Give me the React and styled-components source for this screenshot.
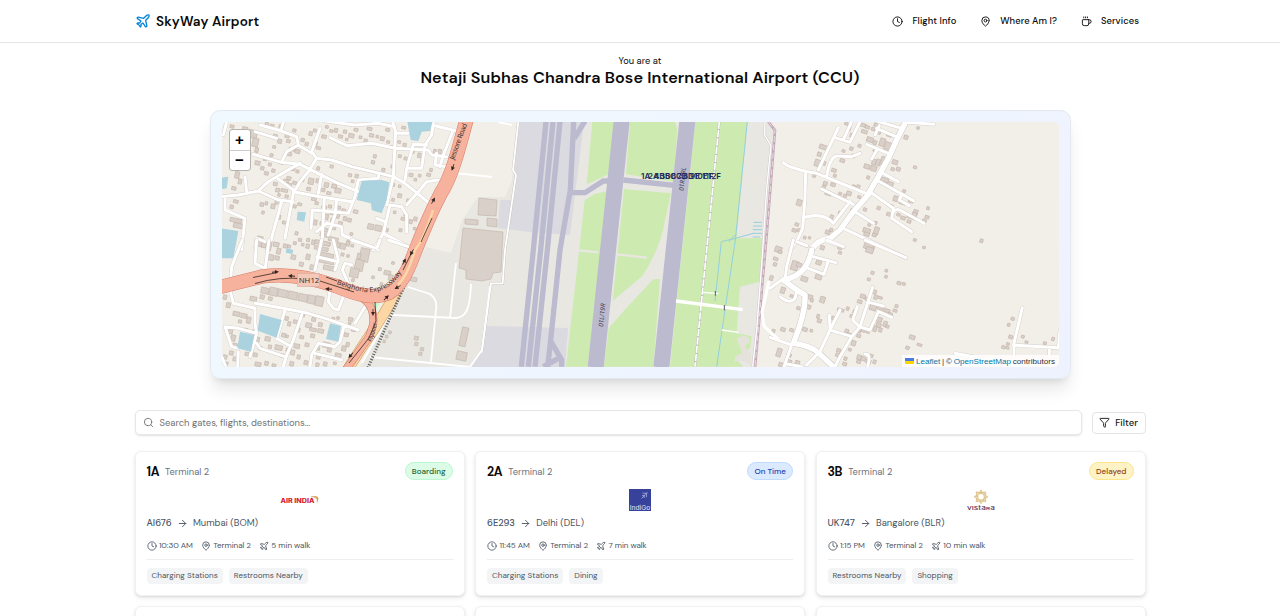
import React from "react";
import styled, { createGlobalStyle } from "styled-components";
import { Plane, Clock, MapPin, Coffee, Search, Filter, ArrowRight } from "lucide-react";

const GlobalStyle = createGlobalStyle`
  * { box-sizing: border-box; }
  html, body { margin: 0; height: 616px; overflow: hidden; background: #fff; }
  body { font-family: "DM Sans", Inter, "Liberation Sans", sans-serif; color: #0a0a0a; }
`;

const Header = styled.header`
  height: 43px;
  border-bottom: 1px solid #e5e7eb;
`;
const HeaderInner = styled.div`
  width: 1010px;
  height: 42px;
  margin: 0 auto;
  padding-right: 6px;
  display: flex;
  align-items: center;
  justify-content: space-between;
`;
const Brand = styled.div`
  display: flex;
  align-items: center;
  gap: 5px;
  font-size: 13.5px;
  font-weight: 600;
  letter-spacing: 0.14px;
  white-space: nowrap;
  svg { color: #0284d8; }
`;
const Nav = styled.nav`
  display: flex;
  gap: 23.7px;
`;
const NavItem = styled.a`
  display: flex;
  align-items: center;
  gap: 9.3px;
  font-size: 9.4px;
  font-weight: 500;
  letter-spacing: 0.06px;
  white-space: nowrap;
`;

const Location = styled.section`
  padding-top: 11px;
  text-align: center;
`;
const Eyebrow = styled.p`
  margin: 0;
  font-size: 9.35px;
  line-height: 14px;
`;
const Title = styled.h1`
  margin: 0;
  font-size: 16.2px;
  line-height: 20px;
  font-weight: 600;
  letter-spacing: 0.11px;
`;

const MapCard = styled.section`
  width: 861px;
  height: 269px;
  margin: 22px auto 0;
  padding: 11px;
  border: 1px solid #e3e9ef;
  border-radius: 10px;
  background: linear-gradient(135deg, #f0f9ff, #eef2ff);
  box-shadow: 0 13px 17px -3px rgba(0, 0, 0, 0.1), 0 5px 7px -4px rgba(0, 0, 0, 0.1);
`;
const MapFrame = styled.div`
  position: relative;
  width: 837px;
  height: 245px;
  overflow: hidden;
  border-radius: 5px;
  background: #f2efe9;
  > svg { display: block; }
`;
const ZoomControl = styled.div`
  position: absolute;
  left: 7px;
  top: 7px;
  width: 22px;
  border: 1px solid #b7b4b0;
  border-radius: 3px;
  background: #fff;
`;
const ZoomButton = styled.div`
  height: 20px;
  padding-bottom: 1px;
  display: flex;
  align-items: center;
  justify-content: center;
  font: bold 15px "Liberation Sans", sans-serif;
  color: #000;
  & + & { height: 20px; padding-bottom: 3px; border-top: 1px solid #ccc; }
`;
const Attribution = styled.div`
  position: absolute;
  right: 0;
  bottom: 0;
  height: 12px;
  padding: 0 3.5px 0 3px;
  display: flex;
  align-items: center;
  gap: 1.8px;
  background: rgba(255, 255, 255, 0.8);
  font: 8.1px "Liberation Sans", sans-serif;
  color: #333;
  white-space: nowrap;
  a { color: #0078a8; }
`;

const SearchRow = styled.div`
  width: 1011px;
  margin: 31px auto 0;
  display: flex;
  align-items: center;
  justify-content: space-between;
`;
const SearchBox = styled.div`
  width: 947px;
  height: 25px;
  display: flex;
  align-items: center;
  gap: 5.5px;
  padding-left: 7.5px;
  border: 1px solid #e5e7eb;
  border-radius: 5px;
  box-shadow: 0 1px 2px rgba(0, 0, 0, 0.12);
  color: #737373;
  font-size: 9.42px;
`;
const FilterButton = styled.button`
  width: 54px;
  height: 22px;
  padding: 0;
  display: flex;
  align-items: center;
  justify-content: center;
  gap: 5px;
  border: 1px solid #e2e4e8;
  border-radius: 4px;
  background: #fff;
  color: #171717;
  font-family: inherit;
  font-size: 9.5px;
  font-weight: 500;
`;

const Grid = styled.main`
  width: 1011px;
  margin: 16px auto 0;
  display: grid;
  grid-template-columns: repeat(3, 1fr);
  gap: 10.5px;
`;
const Card = styled.article`
  height: 144.5px;
  padding: 10px 11px;
  display: flex;
  flex-direction: column;
  border: 1px solid #eff1f3;
  border-radius: 6px;
  background: #fff;
  box-shadow: 0 2px 4px rgba(0, 0, 0, 0.1), 0 1px 2px rgba(0, 0, 0, 0.06);
  color: #4b5563;
`;
const CardHead = styled.div`
  height: 19px;
  display: flex;
  align-items: center;
  gap: 6px;
`;
const Gate = styled.strong`
  font-size: 12.4px;
  font-weight: 700;
  letter-spacing: -0.35px;
  color: #0a0a0a;
`;
const Terminal = styled.span`
  flex: 1;
  font-size: 9.35px;
  color: #6b7280;
`;
const tones = {
  green: ["#dcfce7", "#166534", "#bbf7d0"],
  blue: ["#dbeafe", "#1e40af", "#bfdbfe"],
  yellow: ["#fef3c7", "#92400e", "#fde68a"],
};
const Badge = styled.span`
  height: 18px;
  margin-top: -1px;
  padding: 0 6px;
  display: flex;
  align-items: center;
  border-radius: 9px;
  border: 1px solid ${(p) => tones[p.$tone][2]};
  background: ${(p) => tones[p.$tone][0]};
  color: ${(p) => tones[p.$tone][1]};
  font-size: 8.05px;
  font-weight: 500;
`;
const LogoSlot = styled.div`
  height: 22px;
  margin-top: 8px;
  display: flex;
  justify-content: center;
  align-items: center;
`;
const Route = styled.div`
  height: 14px;
  margin-top: 5px;
  display: flex;
  align-items: center;
  gap: 5.2px;
  font-size: 9.4px;
  b { font-weight: 500; }
`;
const Details = styled.div`
  height: 14px;
  margin-top: 8.5px;
  display: flex;
  align-items: center;
  gap: 8px;
  font-size: 8.1px;
  letter-spacing: -0.05px;
`;
const Detail = styled.span`
  display: flex;
  align-items: center;
  gap: 2.4px;
`;
const Tags = styled.div`
  margin-top: 6px;
  padding-top: 8px;
  display: flex;
  gap: 6px;
  border-top: 1px solid #eceef1;
`;
const Tag = styled.span`
  height: 16px;
  padding: 0 5px;
  display: flex;
  align-items: center;
  border-radius: 4px;
  background: #f3f4f6;
  font-size: 8.1px;
`;

/* Buildings: x, y, width, height in the district's own units */
const west = [[112,15,14,20],[75,60,12,9],[130,75,26,24],[142,100,18,25],[150,128,10,14],[112,66,16,12],[180,52,10,14],[195,58,12,9],[205,88,12,8],[222,60,14,10],[218,103,12,12],[203,122,9,8],[240,88,13,10],[244,104,12,9],[263,72,10,9],[252,128,20,10],[245,142,15,10],[270,133,15,12],[288,100,10,10],[300,112,10,10],[312,80,10,12],[325,72,9,9],[350,90,14,10],[326,110,11,10],[333,125,14,8],[361,62,9,8],[374,74,10,8],[388,70,10,12],[400,90,13,9],[415,75,10,10],[431,86,16,12],[447,70,12,9],[462,93,9,8],[477,102,10,9],[486,67,15,9],[493,86,13,10],[513,91,8,8],[526,95,12,12],[542,70,12,9],[545,107,9,8],[555,122,8,8],[578,107,9,8],[590,64,12,8],[594,115,10,9],[390,105,9,7],[421,100,8,7],[505,149,9,10],[499,167,10,10],[530,190,10,9],[558,180,11,10],[580,149,9,9],[597,156,10,9],[620,137,8,8],[638,144,10,14],[648,160,8,8],[685,133,9,14],[700,133,9,13],[674,190,8,10],[665,205,12,9],[640,208,8,8],[627,220,8,8],[560,235,9,9],[580,240,8,8],[578,266,12,12],[560,280,8,9],[605,282,9,9],[612,205,12,10],[85,145,14,10],[175,158,10,9],[195,146,9,9],[150,168,15,12],[167,185,10,10],[190,174,9,9],[178,200,12,10],[200,192,10,10],[90,200,13,20],[100,222,10,15],[80,245,13,10],[115,178,10,9],[223,167,12,10],[258,187,12,10],[273,195,9,9],[285,220,12,9],[245,215,13,10],[235,224,16,8],[205,232,12,10],[212,250,12,11],[228,252,20,9],[245,235,15,12],[263,229,12,9],[218,266,8,8],[240,270,10,9],[310,220,16,18],[333,222,14,12],[305,247,12,10],[358,233,13,14],[380,238,15,12],[390,250,18,14],[365,260,13,9],[350,250,10,10],[375,180,10,9],[335,185,9,10],[430,206,10,9],[439,225,8,8],[450,208,10,10],[75,300,10,11],[85,285,15,9],[165,293,11,11],[198,297,12,14],[210,286,10,11],[180,290,8,10],[265,300,9,9],[278,294,12,8],[170,318,8,9],[75,340,35,12],[85,355,28,14],[218,330,9,13],[232,348,9,9],[320,275,14,12],[330,290,10,9],[350,302,15,9],[370,300,10,9],[395,303,12,9],[410,312,12,9],[357,328,13,16],[377,340,12,12],[394,327,9,13],[415,335,10,12],[400,350,12,11],[375,320,10,9],[326,345,10,15],[345,350,11,10],[355,370,14,11],[380,364,12,10],[488,357,18,16],[510,361,20,17],[535,370,15,9],[428,340,11,11],[445,315,14,10],[425,405,10,12],[435,383,8,8],[270,380,9,10],[280,400,10,9],[265,410,9,9],[248,420,9,9],[305,400,9,10],[345,385,24,10],[370,397,30,12],[320,405,10,14],[360,412,16,10],[395,413,10,14],[565,318,8,8],[588,337,12,9],[612,344,10,12],[626,336,10,12],[597,326,8,8],[582,371,9,9],[625,367,8,8],[155,394,17,30],[170,410,13,18]];
const southWest = [[185,5,14,26],[205,7,17,13],[215,25,12,17],[190,44,16,17],[210,48,13,12],[235,12,12,12],[258,45,14,13],[289,10,8,8],[303,12,10,13],[303,43,12,16],[283,67,12,12],[330,3,45,12],[328,20,42,11],[341,39,45,12],[338,57,49,13],[355,78,37,13],[315,75,14,14],[405,10,17,17],[424,5,10,13],[438,13,8,8],[408,39,9,9],[425,44,8,8],[465,25,27,40],[450,59,25,34],[435,85,26,27],[440,116,8,9],[457,40,10,16],[520,83,9,9],[537,92,20,13],[551,104,12,17],[560,65,8,8],[525,128,8,10],[500,108,8,8],[168,143,23,18],[193,143,25,24],[218,149,28,22],[249,155,28,23],[280,162,27,22],[308,166,22,25],[331,169,24,29],[165,165,13,12],[190,171,12,10],[135,170,20,13],[55,165,10,13],[64,188,12,15],[84,215,21,13],[108,221,18,13],[125,231,12,19],[70,265,13,16],[78,285,13,18],[84,310,13,12],[117,265,12,7],[140,270,9,12],[150,291,13,16],[160,318,10,12],[145,339,12,11],[120,337,13,10],[100,240,10,9],[180,290,16,13],[190,315,10,10],[210,316,22,14],[225,342,16,10],[230,280,12,11],[242,285,8,8],[243,325,10,10],[257,330,12,15],[267,312,17,13],[284,287,12,9],[248,245,9,13],[240,230,10,11],[265,240,12,10],[273,263,12,13],[286,220,13,10],[302,249,18,14],[320,233,12,11],[314,264,20,10],[317,282,12,11],[300,309,12,11],[338,267,18,12],[340,248,12,12],[353,307,22,16],[330,320,14,10],[367,324,12,12],[390,340,18,15],[430,233,14,10],[417,279,13,11],[423,307,10,13],[410,318,13,15],[380,232,9,11],[430,246,8,8],[439,265,13,9],[55,345,11,12],[73,333,12,12],[84,351,12,12],[60,366,9,9],[150,367,18,12],[179,364,11,12],[201,372,12,8],[254,365,12,13],[276,345,10,12],[297,362,12,12],[334,345,12,12],[332,369,10,11],[355,366,11,12],[385,366,9,8],[395,230,8,8],[617,112,18,12],[767,262,19,57],[755,335,30,26],[628,289,12,11],[629,307,10,10],[646,323,10,9],[641,337,10,9],[551,273,8,8],[541,286,8,8],[534,300,7,8]];
const northEast = [[224,52,10,8],[233,65,9,12],[240,85,9,12],[268,55,20,10],[285,62,14,9],[274,75,18,10],[304,68,12,9],[312,55,12,10],[328,45,18,10],[320,78,12,9],[350,83,16,12],[310,107,10,12],[290,97,20,14],[329,100,16,24],[344,112,20,24],[310,129,14,12],[402,91,12,12],[440,65,8,8],[430,183,10,8],[148,120,25,13],[142,142,12,12],[134,164,17,20],[154,168,13,12],[216,134,9,8],[239,126,10,10],[264,118,9,9],[245,148,10,10],[210,162,14,10],[185,191,14,10],[190,208,9,8],[128,207,9,10],[160,230,12,11],[182,234,14,10],[156,242,10,9],[165,262,20,9],[206,262,9,8],[230,259,14,12],[220,268,10,9],[247,240,9,9],[260,240,10,10],[263,272,9,8],[282,178,18,13],[302,183,18,15],[306,163,12,16],[318,163,13,19],[332,155,14,25],[290,213,9,9],[367,165,16,13],[363,188,10,9],[379,187,12,11],[331,218,25,13],[353,231,17,12],[398,254,9,8],[370,273,14,16],[387,290,20,8],[415,285,15,8],[430,314,13,17],[411,328,12,11],[425,322,14,22],[392,334,14,10],[411,345,12,9],[380,325,10,8],[457,343,12,9],[465,332,12,9],[470,305,8,9],[80,284,15,18],[180,330,10,12],[205,319,9,9],[241,311,12,15],[280,309,10,9],[321,304,10,10],[359,299,10,9],[350,323,13,10],[75,354,11,9],[66,371,13,10],[82,371,9,10],[100,394,8,8],[115,395,7,7],[166,376,14,12],[179,370,9,10],[279,370,22,14],[282,382,16,11],[312,366,14,23],[307,385,12,10],[294,354,8,10],[313,349,8,9],[288,418,25,17],[430,401,9,8],[458,424,8,7],[630,402,9,11]];
const southEast = [[15,20,20,17],[10,52,14,9],[10,68,10,10],[24,32,12,8],[-1,107,10,14],[64,63,20,28],[80,69,15,12],[93,110,20,14],[136,103,19,15],[138,61,16,13],[151,17,12,12],[205,34,10,8],[203,20,12,8],[282,9,28,19],[288,22,22,17],[303,94,9,9],[292,114,9,8],[345,88,8,8],[344,106,8,8],[381,125,12,9],[397,128,9,8],[32,142,13,18],[60,164,10,8],[113,165,15,13],[121,176,9,10],[150,170,15,18],[110,195,12,12],[80,200,10,9],[140,223,8,12],[142,237,12,11],[185,229,9,10],[202,206,20,8],[229,201,8,10],[249,210,10,11],[240,224,12,9],[262,180,14,10],[271,163,15,12],[286,172,10,10],[308,150,11,12],[312,165,10,13],[325,170,12,7],[299,195,20,16],[323,199,16,10],[341,207,19,10],[369,208,12,8],[375,194,9,9],[354,218,13,11],[319,232,17,13],[318,249,15,13],[326,264,10,12],[310,258,10,17],[340,244,11,16],[347,255,10,9],[274,265,13,11],[260,283,12,9],[266,270,7,9],[290,268,9,12],[225,268,11,10],[230,279,14,9],[244,302,13,15],[98,263,14,11],[120,268,8,8],[32,263,14,11],[59,266,12,9],[6,268,9,9],[20,325,14,25],[50,341,14,9],[52,360,13,12],[76,362,13,11],[26,368,13,12],[200,326,12,10],[197,340,13,10],[235,325,9,8],[222,351,9,10],[218,367,12,10],[261,345,13,14],[273,350,14,12],[288,359,15,11],[309,360,9,11],[299,343,10,9],[260,360,12,10],[418,286,17,12],[407,319,11,9],[441,311,15,7],[723,232,10,9],[712,250,8,9],[716,286,12,10],[754,286,9,8],[765,303,9,7],[709,308,9,8],[695,317,10,9],[845,292,8,10],[820,306,9,8],[707,320,10,7]];

function District({ y = 0, x = 0, roads, wide, buildings, children, tilt = 12 }) {
  return (
    <g transform={`translate(${x} ${y}) scale(.33333)`}>
      <g fill="#d9d0c9" stroke="#c4b5aa" strokeWidth="1.9">
        {buildings.map(([bx, by, w, h], i) => (
          <rect key={i} x={bx} y={by} width={w} height={h}
            transform={`rotate(${tilt} ${bx + w / 2} ${by + h / 2})`} />
        ))}
      </g>
      <g fill="none" strokeLinecap="round" strokeLinejoin="round">
        <path d={roads} stroke="#d4cdc8" strokeWidth="11.5" />
        {wide && <path d={wide} stroke="#c9c2bd" strokeWidth="19" />}
        <path d={roads} stroke="#fff" strokeWidth="9" />
        {wide && <path d={wide} stroke="#fff" strokeWidth="16.5" />}
      </g>
      {children}
    </g>
  );
}

const gateLabels = [["1A",641],["2A",648],["4B",654],["3B",660],["5C",665],["6C",671],["7D",677],["8D",683],["9E",690],["10E",694],["11F",702],["12F",708]];

const expressway = "M467 118 C458 152 451 178 441 193 C430 214 421 236 414 254 C407 273 400 286 389 293 C373 300 355 294 336 286 C313 278 286 273 262 276.5 L218 287.5";

function AirportMap() {
  return (
    <svg width="837" height="245" viewBox="222 122 837 245">
      <rect x="222" y="122" width="837" height="245" fill="#f2efe9" />
      <path d="M519 122 L512 180 L505 197 L478 197 L462 220 L451 253 L426 247 L402 290 L360 367 H757 L766 250 L776 129 L769 122Z" fill="#e8e7e2" />
      <path d="M519 122 H584 L570 235 L530 232 L498 228 L500 200 L512 200Z" fill="#dadae0" />
      <path d="M486 326 L568 328 L565 367 H470 L482 350Z" fill="#dadae0" />
      <g transform="translate(480 105) scale(.33333)">
        <g fill="#cdebb0">
          <path d="M337 50 H402 L386 208 L320 238Z" />
          <path d="M450 50 H585 L592 75 L580 230 L438 208Z" />
          <path d="M314 286 L345 266 L382 259 L323 785 H258 L297 440Z" />
          <path d="M432 252 L573 265 L555 345 Q545 420 488 512 L398 588Z" />
          <path d="M540 522 L520 785 H372 L386 670 L440 608 L520 523Z" />
          <path d="M646 50 H802 L770 400 H848 L840 530 L780 545 L770 685 L815 694 L810 730 L765 758 L790 785 H570Z" />
        </g>
        <path d="M295 436 L355 442 M410 448 L500 458" stroke="#e8e7e2" strokeWidth="7" fill="none" />
        <path d="M770 700 Q808 682 810 712 Q780 725 812 740 L815 785 Q795 760 763 770 Q765 745 788 746Z" fill="#e5e2dc" />
        <g fill="none" stroke="#bbbacf" strokeWidth="16">
          <path d="M198 50 L160 435 L124 785 M219 50 L182 435 L145 785 M240 50 L202 435 L165 785" />
          <path d="M281 50 L271 255 L240 435 L211 715 L203 785 M315 48 L283 100 M213 710 L245 765 V785 M190 785 L245 755" />
          <path d="M268 263 H315 L370 228 H395 M430 225 L590 242" />
          <path d="M425 48 L347 787 M622 48 L544 787" strokeWidth="48" />
        </g>
        <path d="M718 50 L680 435 L645 785" fill="none" stroke="#bdb5b7" strokeWidth="7" />
        <path d="M718 50 L680 435 L645 785" fill="none" stroke="#fff" strokeWidth="5" strokeDasharray="22 3" />
        <path d="M802 50 L766 405 L710 785 M705 588 L724 410 Q770 400 820 385 M765 390 L747 410 M820 352H846 M819 363H846 M818 374H846 M818 385H846 M818 396H840" fill="none" stroke="#93cfdf" strokeWidth="3" />
        <path d="M588 588 L788 614" stroke="#fff" strokeWidth="10" />
        <path d="M668 562 L715 566 M725 675 L775 682" stroke="#fff" strokeWidth="4" />
        <path d="M706 558V572 M733 600V616" stroke="#556" strokeWidth="3" />
        <path d="M865 50 L885 76 L860 390 L825 785" fill="none" stroke="#c5a7b8" strokeWidth="8" />
        <path d="M865 50 L885 76 L860 390 L825 785" fill="none" stroke="#eee5e7" strokeWidth="2.5" strokeDasharray="18 7" />
        <path d="M855 50 L854 90 L873 122 L860 250 L846 465 L830 675 L818 785" fill="none" stroke="#d0c8ca" strokeWidth="7" />
        <path d="M855 50 L854 90 L873 122 L860 250 L846 465 L830 675 L818 785" fill="none" stroke="#fff" strokeWidth="4" />
        <path d="M115 50 L99 195 L108 210 L75 435 L68 535 L33 535 L5 743" fill="none" stroke="#c8c3bf" strokeWidth="8" />
        <path d="M115 50 L99 195 L108 210 L75 435 L68 535 L33 535 L5 743" fill="none" stroke="#fff" strokeWidth="5.5" />
      </g>
      <g fill="#d9d0c9" stroke="#c6b8ad" strokeWidth=".7">
        <path d="M479 198 L497 200 L496 216 L478 215Z M465 219 L478 220 V225 L465 224Z M487 218 L497 219 V227 L487 226Z M463 228 L503 232 L501 272 L493 273 L491 279 L482 281 L466 279 V270 L459 268Z" />
      </g>
      <path d="M456 263 L450 318 M471 284 C470 310 466 317 456 318 L393 315 Q387 317 382 328 L362 363 M408 287 L430 294 Q438 300 436 310 L431 362 M370 357 L470 367 L482 350 L490 286 M455 173 L492 177 M498 122 L512 125" fill="none" stroke="#fff" strokeWidth="1.8" />

      <District x={205} y={105} buildings={west}
        roads="M45 275 L100 270 L160 258 L190 230 L240 200 L285 175 M160 258 L220 285 L265 290 M345 70 L320 140 L335 160 L310 200 L285 230 L265 265 L240 400 M145 148 L230 172 L285 178 L345 208 L400 235 L460 260 M230 172 L245 140 L280 120 L320 145 M375 98 L425 122 L500 115 L570 130 L670 135 L680 150 L725 155 M335 160 L380 165 L440 185 L565 215 L600 235 L680 300 M560 40 L572 80 L565 215 L545 300 M360 48 L450 60 L520 55 L570 65 M570 85 L610 85 M150 80 L215 100 M165 60 L220 75 L275 95 L280 120 M235 50 L230 70 M685 50 L680 90 L660 120 L650 190 L605 190 M625 118 L605 190 L600 225 M680 60 L755 78 M745 75 L715 150 L705 185 M625 118 L665 120 M695 145 L690 180 L725 185 M460 225 L450 275 L430 325 L322 315 L318 370 M265 260 L345 275 L440 290 M350 208 L340 265 M395 285 L390 330 L370 390 M358 280 L350 435 M460 225 L520 220 L522 205 M60 280 L60 315 L120 340 L110 435 M230 290 L190 435 M335 380 L365 355 L410 365 L412 390 L520 435 M555 300 L535 385 L610 425 M555 300 L590 305 L605 330 L605 380 M605 300 L640 260 L665 230 L700 225 M535 385 L505 435 M515 340 L540 350 M120 215 L125 260 M65 50 L55 90 M220 222 L265 255 M150 435 L155 400 L180 410">
        <g fill="#aad3df">
          <path d="M607 50 H683 L675 78 L650 80 L640 108 L617 105Z M470 227 L530 225 L553 232 L545 285 L530 325 L500 315 L498 295 L455 285Z M50 218 L70 215 L65 250 L50 252Z M278 320 L303 322 L298 350 L275 345Z M50 370 L100 378 L85 460 H50Z" />
        </g>
      </District>
      <District x={205} y={240} buildings={southWest}
        roads="M112 0 L80 80 L75 150 L85 190 L150 205 M192 0 L180 90 M150 190 L235 205 L310 220 L370 238 L460 270 M480 200 L450 250 M418 255 L405 305 L390 320 L340 310 L320 345 L315 380 M290 225 L265 300 L245 345 L235 380 M240 210 L215 295 L250 315 M150 205 L150 250 L155 280 L135 350 M60 260 L100 265 L155 280 M60 260 L80 320 L98 325 M155 310 L165 325 L240 350 M100 335 L98 380 M330 340 L410 360 M50 350 L62 380 M350 0 L330 90 M385 0 L400 60 L390 90 M440 0 L515 25 L525 0 M550 0 L610 20 M180 85 L150 70 L155 0 M440 75 L420 70 L412 90 L430 130 L400 210 L385 205 L370 185 L375 150 M335 50 L400 65">
        <path d="M50 0 H93 L80 50 L50 48Z M165 222 L230 240 L215 293 L158 272Z M105 275 L148 285 L138 335 L97 325Z M375 250 L408 258 L400 305 L363 297Z M245 25 L265 30 L262 42 L242 38Z" fill="#aad3df" />
      </District>
      <District x={770} y={105} buildings={northEast} tilt={18}
        roads="M40 173 Q60 192 140 205 L300 270 M205 68 L145 195 M195 98 L240 112 L270 50 M222 100 L245 50 M170 215 Q180 150 205 153 L245 155 L270 145 M107 200 L105 280 L98 370 L80 410 L60 435 M100 338 Q160 320 190 355 M190 355 L240 290 M155 252 L250 298 M300 260 L370 310 L365 340 L425 380 M325 228 L430 287 M335 203 L385 230 M255 320 L310 355 M220 370 L405 457 M160 405 L220 427 M80 410 L110 422 M370 320 Q380 308 395 318 L462 355 M388 285 L418 302 M388 285 L395 268 M290 118 L355 145 M322 133 L305 162 M320 70 L385 98 M325 50 L395 70 M328 62 L315 90 M410 52 L492 58"
        wide="M410 45 L380 105 L355 160 L325 215 L290 275 L250 320 L210 375 L180 400 Q140 405 125 435" />
      <District x={770} y={240} buildings={southEast} tilt={18}
        roads="M70 0 L50 80 L45 120 M0 145 L35 120 M130 50 L197 68 M175 62 L162 103 L115 85 M220 20 L170 0 M80 5 L110 17 M285 0 L407 53 M30 170 Q60 195 75 175 L80 155 M0 292 L65 315 L42 380 M178 225 L180 270 L150 335 L110 375 M210 210 L180 270 L245 290 M308 142 L270 260 L245 290 L210 350 L195 380 M262 200 L248 240 L268 260 L300 270 L325 215 L365 232 M298 187 L340 198 M757 203 L732 310 V350 M730 315 L865 323 L870 270 M838 325 V350 M555 340 L610 350 M285 342 Q305 340 293 380 M50 372 L95 380"
        wide="M125 30 Q120 60 105 82 Q85 110 40 120 Q85 155 105 165 Q108 215 70 310 Q115 315 145 338 L190 380" />
      <path d="M769 281 L762 312 L764 326 L780 341" fill="none" stroke="#fff" strokeWidth="3" />

      <path d="M398 288 C386 315 365 340 347 371" fill="none" stroke="#c69a59" strokeWidth="11" />
      <path d="M398 288 C386 315 365 340 347 371" fill="none" stroke="#fcd6a4" strokeWidth="10" />
      <path d="M371 302 L381 299 L376 311Z" fill="#c8facc" />
      <path d="M405 285 C391 315 380 340 367 370" fill="none" stroke="#696969" strokeWidth="3" strokeDasharray="1.3 1.5" />
      <path d="M340 287 C362 296 376 302 373 325 L369 337 L345 371" fill="none" stroke="#cd7e70" strokeWidth="8" />
      <path d="M340 287 C362 296 376 302 373 325 L369 337 L345 371" fill="none" stroke="#f6b29d" strokeWidth="7" />
      <path d={expressway} fill="none" stroke="#d67b69" strokeWidth="14.3" />
      <path d={expressway} fill="none" stroke="#f6b29d" strokeWidth="13.3" />
      <path d="M433 210 Q424 239 415 250 Q408 275 398 285" fill="none" stroke="#fcd6a4" strokeWidth="2.5" />
      <g fill="none" stroke="#342722" strokeWidth=".8">
        <path d="M253 277.5 L275 273 M255 283.5 Q280 276 305 279 M326 277 L337 281 M320 281 L354 292 M432 218 L421 242 M412 252 L403 270 M375 302 L376 321 L369 338 L349 363" />
      </g>
      <g fill="#302320">
        {[[275,272,-5],[292,276,185],[329,289,185],[404,262,-62],[412,252,120],[398,287,150],[386,298,-45],[373,312,90],[351,355,130],[433,201,-60],[453,167,110]].map(([x, y, a]) => (
          <path key={x + "-" + y} d="M-3 -.4H0V-2L4 0L0 2V.4H-3Z" transform={`translate(${x} ${y}) rotate(${a})`} />
        ))}
      </g>
      <rect x="297.5" y="273.5" width="22" height="13" fill="#f5c9ba" stroke="#d8aa9d" strokeWidth=".6" />
      <defs>
        <path id="express-label" d="M337 283 C358 290 383 303 403 268" />
        <path id="jessore-label" d="M454 160 L468 122" />
        <path id="flyover-label" d="M371 342 Q377 330 378 314" />
      </defs>
      <g fontFamily='"Noto Sans", sans-serif' fontSize="7" fill="#43322e">
        <text x="298.7" y="282.7" fontSize="7.8">NH12</text>
        <text dy="1"><textPath href="#express-label">Belghoria Expressway</textPath></text>
        <text><textPath href="#jessore-label" textLength="38">Jessore Road</textPath></text>
        <text fontSize="6"><textPath href="#flyover-label">Flyover</textPath></text>
        <g fill="#403f50" fontStyle="italic" fontSize="6.5">
          <text transform="translate(683.5 191) rotate(-84)">01R/19L</text>
          <text transform="translate(603 327) rotate(-84)">01L/19R</text>
        </g>
      </g>
      <g fontFamily="Inter, sans-serif" fontSize="8" fontWeight="600" fill="#1e2a5e">
        {gateLabels.map(([label, x]) => <text key={label} x={x} y="179.3">{label}</text>)}
      </g>
    </svg>
  );
}

function AirIndiaLogo() {
  return (
    <svg width="40" height="12" viewBox="0 0 40 12">
      <text x="0.5" y="8.6" textLength="34" lengthAdjust="spacingAndGlyphs" fontFamily="Inter, sans-serif" fontSize="5.6" fontWeight="800" fill="#d51b36">AIR INDIA</text>
      <path d="M31 2.8 Q41 .4 37 8.4 Q38.4 3 31 2.8Z" fill="#d9a34d" stroke="#d08d4c" strokeWidth=".4" />
    </svg>
  );
}
function IndigoLogo() {
  return (
    <svg width="22" height="22" viewBox="0 0 22 22">
      <rect width="22" height="22" fill="#37439b" />
      <path d="M12.5 9.5 L18.5 3.2 M13.5 4.2 L17.5 4.3 M17.6 4.2 L17.4 8.2 M13 6.6 L15.3 6.5 L15.2 9" fill="none" stroke="#c7cdf3" strokeWidth=".6" />
      <text x=".8" y="20.6" textLength="20.4" lengthAdjust="spacingAndGlyphs" fontFamily="Inter, sans-serif" fontSize="6.6" fill="#e7e9fa">IndiGo</text>
    </svg>
  );
}
function VistaraLogo() {
  return (
    <svg width="28" height="22" viewBox="0 0 28 22">
      <g fill="#ead7a8" stroke="#cfae6c" strokeWidth=".5">
        {[0, 45, 90, 135, 180, 225, 270, 315].map((a) => (
          <path key={a} d="M11.2 4.9 L14 .8 L16.8 4.9 L14 6Z" transform={`rotate(${a} 14 7.8)`} />
        ))}
      </g>
      <circle cx="14" cy="7.8" r="2.7" fill="#fff" />
      <text x="0" y="20.7" textLength="28" lengthAdjust="spacingAndGlyphs" fontFamily="Inter, sans-serif" fontSize="5.6" fontWeight="500" fill="#5d345f">vıstaʀa</text>
    </svg>
  );
}

const flights = [
  { gate: "1A", status: "Boarding", tone: "green", Logo: AirIndiaLogo, code: "AI676", to: "Mumbai (BOM)", time: "10:30 AM", walk: "5 min walk", tags: ["Charging Stations", "Restrooms Nearby"] },
  { gate: "2A", status: "On Time", tone: "blue", Logo: IndigoLogo, code: "6E293", to: "Delhi (DEL)", time: "11:45 AM", walk: "7 min walk", tags: ["Charging Stations", "Dining"] },
  { gate: "3B", status: "Delayed", tone: "yellow", Logo: VistaraLogo, code: "UK747", to: "Bangalore (BLR)", time: "1:15 PM", walk: "10 min walk", tags: ["Restrooms Nearby", "Shopping"] },
];

function FlightCard({ gate, status, tone, Logo, code, to, time, walk, tags }) {
  return (
    <Card>
      <CardHead><Gate>{gate}</Gate><Terminal>Terminal 2</Terminal><Badge $tone={tone}>{status}</Badge></CardHead>
      <LogoSlot><Logo /></LogoSlot>
      <Route><b>{code}</b><ArrowRight size={11} /><span>{to}</span></Route>
      <Details>
        <Detail><Clock size={10} />{time}</Detail>
        <Detail><MapPin size={10} />Terminal 2</Detail>
        <Detail><Plane size={10} />{walk}</Detail>
      </Details>
      <Tags>{tags.map((t) => <Tag key={t}>{t}</Tag>)}</Tags>
    </Card>
  );
}

export default function App() {
  return (
    <>
      <GlobalStyle />
      <Header>
        <HeaderInner>
          <Brand><Plane size={16} />SkyWay Airport</Brand>
          <Nav>
            <NavItem><Clock size={11} />Flight Info</NavItem>
            <NavItem><MapPin size={11} />Where Am I?</NavItem>
            <NavItem><Coffee size={11} />Services</NavItem>
          </Nav>
        </HeaderInner>
      </Header>
      <Location>
        <Eyebrow>You are at</Eyebrow>
        <Title>Netaji Subhas Chandra Bose International Airport (CCU)</Title>
      </Location>
      <MapCard>
        <MapFrame>
          <AirportMap />
          <ZoomControl><ZoomButton>+</ZoomButton><ZoomButton>−</ZoomButton></ZoomControl>
          <Attribution>
            <svg width="9" height="6" viewBox="0 0 9 6"><path fill="#4c7be1" d="M0 0h9v3H0z" /><path fill="#ffd500" d="M0 3h9v3H0z" /></svg>
            <a>Leaflet</a> <span>|</span> <span>©</span> <a>OpenStreetMap</a> <span>contributors</span>
          </Attribution>
        </MapFrame>
      </MapCard>
      <SearchRow>
        <SearchBox><Search size={11} />Search gates, flights, destinations...</SearchBox>
        <FilterButton><Filter size={11} />Filter</FilterButton>
      </SearchRow>
      <Grid>
        {flights.map((f) => <FlightCard key={f.gate} {...f} />)}
        <Card /><Card /><Card />
      </Grid>
    </>
  );
}
